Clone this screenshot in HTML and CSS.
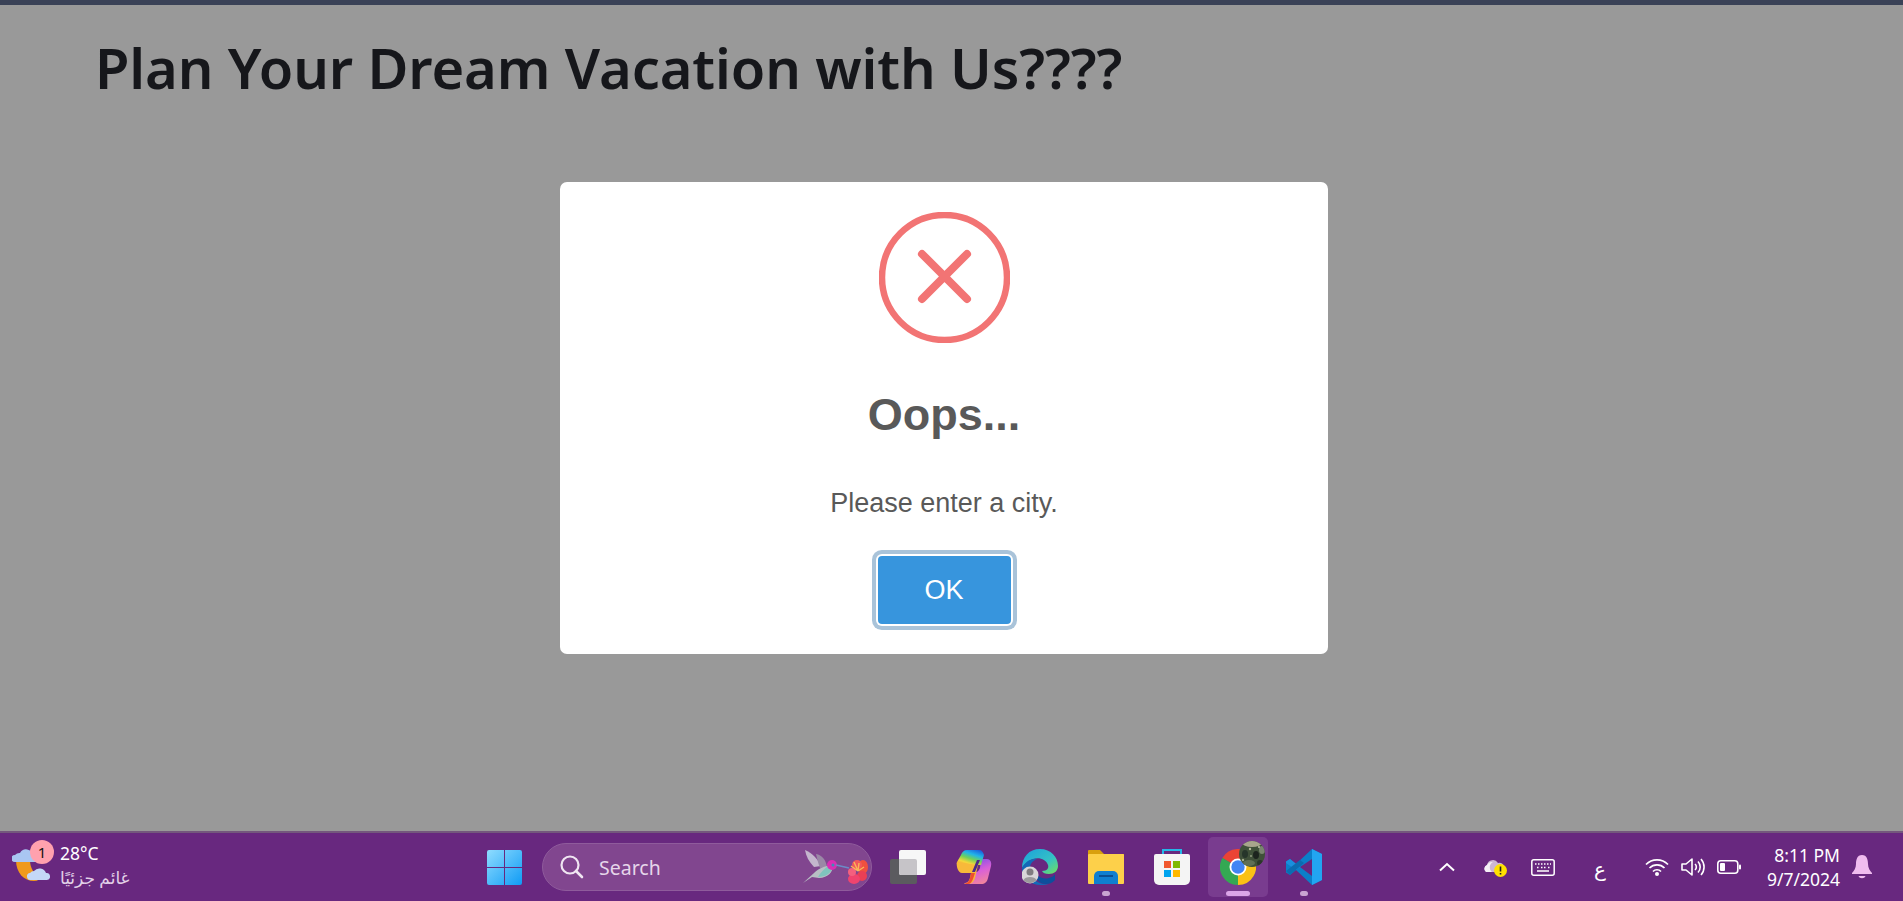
FILE: index.html
```html
<!DOCTYPE html>
<html lang="en">
<head>
<meta charset="utf-8">
<title>Plan Your Dream Vacation</title>
<link rel="stylesheet" href="styles.css">
</head>
<body>
<div class="topline"></div>
<main class="page">
  <h1 class="headline">Plan Your Dream Vacation with Us????</h1>
  <div class="overlay">
    <div class="modal" role="dialog">
      <svg class="err-icon" viewBox="0 0 131 131" width="131" height="131">
        <circle cx="65.5" cy="65.5" r="62.5" fill="none" stroke="#f27474" stroke-width="6.500"/>
        <path d="M43 42 L88 87 M88 42 L43 87" fill="none" stroke="#f27474" stroke-width="8" stroke-linecap="round"/>
      </svg>
      <h2 class="modal-title">Oops...</h2>
      <p class="modal-text">Please enter a city.</p>
      <button class="modal-ok">OK</button>
    </div>
  </div>
</main>
<footer class="taskbar">
  <div class="weather">
    <span class="weather-icon">
      <svg viewBox="0 0 38 42" width="38" height="42">
        <path d="M4 14 C4 27 12 35 22 35 C26 35 28 33 29 31 C22 29 18 22 18 14 Z" fill="#f09a1c"/>
        <path d="M3 16 a3.500 3.500 0 0 1 0 -7 a6 6 0 0 1 5 -2 a7 7 0 0 1 13 2 a3.500 3.500 0 0 1 3 7 z" fill="#a9c6f2"/>
        <path d="M19 34 a3.500 3.500 0 0 1 -1 -7 a5 5 0 0 1 4 -2 a7 7 0 0 1 12 2 a3.500 3.500 0 0 1 1 7 z" fill="#c4d8f7"/>
      </svg>
      <span class="badge">1</span>
    </span>
    <div class="weather-text">
      <span class="temp">28°C</span>
      <span class="cond" dir="rtl">غائم جزئيًا</span>
    </div>
  </div>
  <div class="center">
    <span class="start">
      <svg viewBox="0 0 35 35" width="35" height="35">
        <defs>
          <linearGradient id="win" x1="0" y1="0" x2="1" y2="1"><stop offset="0" stop-color="#8fdcff"/><stop offset="1" stop-color="#0f9bf5"/></linearGradient>
        </defs>
        <path d="M2 0h15v17H0V2a2 2 0 0 1 2-2zM18 0h15a2 2 0 0 1 2 2v15H18zM0 18h17v17H2a2 2 0 0 1-2-2zM18 18h17v15a2 2 0 0 1-2 2H18z" fill="url(#win)"/>
      </svg>
    </span>
    <div class="search">
      <svg class="search-glass" viewBox="0 0 24 24" width="24" height="24">
        <circle cx="10" cy="10" r="8.500" fill="none" stroke="#f0e6f2" stroke-width="2.200"/>
        <path d="M16 16 L22 22" stroke="#f0e6f2" stroke-width="2.600" stroke-linecap="round"/>
      </svg>
      <span class="search-label">Search</span>
      <svg class="search-art" viewBox="0 0 66 36" width="66" height="36">
        <path d="M3 1 C10 4 16 10 19 17 L12 18 C7 13 4 7 3 1 Z" fill="#c4b6cd"/>
        <path d="M14 5 C20 6 24 11 25 18 L18 19 C16 14 15 9 14 5 Z" fill="#9a88a6"/>
        <path d="M1 34 L12 24 C18 18 26 16 30 17 C32 22 26 29 17 29 L10 28 Z" fill="#b8bfc4"/>
        <path d="M16 28 C24 28 29 24 31 18 L26 17 C22 20 18 24 16 28 Z" fill="#7fc4bd"/>
        <circle cx="30" cy="16" r="5" fill="#d92fb4"/>
        <circle cx="31" cy="16" r="1.500" fill="#3a8fb8"/>
        <path d="M34 16 L47 19" stroke="#6b8bc7" stroke-width="1.400"/>
        <ellipse cx="61" cy="18" rx="5" ry="7" fill="#f0503f"/>
        <ellipse cx="55" cy="16" rx="5" ry="5" fill="#f2585a"/>
        <ellipse cx="60" cy="27" rx="5" ry="5" fill="#ea3f55"/>
        <ellipse cx="52" cy="30" rx="6" ry="5" fill="#f0446e"/>
        <ellipse cx="50" cy="23" rx="4" ry="4" fill="#f4607e"/>
        <path d="M56 22 L52 13 M56 22 L49 17 M56 22 L57 14 M56 22 L62 18" stroke="#f9b65a" stroke-width="1.400"/>
      </svg>
    </div>
    <span class="tile">
      <svg viewBox="0 0 36 34" width="36" height="34">
        <rect x="0" y="9" width="27" height="25" rx="2" fill="#5b5b5f"/>
        <rect x="9" y="0" width="27" height="25" rx="2" fill="#f7f7f7"/>
        <path d="M9 9h16a2 2 0 0 1 2 2v14H11a2 2 0 0 1-2-2z" fill="#c6c4c8"/>
      </svg>
    </span>
    <span class="tile">
      <svg viewBox="0 0 36 34" width="36" height="34">
        <defs>
          <linearGradient id="cp1" x1=".8" y1="0" x2=".2" y2="1"><stop offset="0" stop-color="#1a5fe0"/><stop offset=".3" stop-color="#22b5e8"/><stop offset=".55" stop-color="#6fd25a"/><stop offset=".8" stop-color="#f6d73a"/><stop offset="1" stop-color="#f2a03a"/></linearGradient>
          <linearGradient id="cp2" x1=".3" y1="0" x2=".7" y2="1"><stop offset="0" stop-color="#7b4fe6"/><stop offset=".5" stop-color="#d95fd8"/><stop offset="1" stop-color="#f2869a"/></linearGradient>
        </defs>
        <path d="M25 9h6c3 0 5 3 4 7l-3 12c-1 4-3 6-7 6H12c-2 0-3 0-4-1 3 0 6-2 7-6l2-5h3c2 0 3-2 4-4z" fill="url(#cp2)"/>
        <path d="M11 0h12c3 0 4 2 5 5l-3 10H6c-4 0-6 1-5-3L5 5c1-3 3-5 6-5z" fill="url(#cp1)"/>
        <path d="M1 12c-1 4 1 11 5 11h9l-1 5c-1 3-2 5-6 6h4c4 0 6-3 7-6l3-13z" fill="#f8b93a"/>
        <path d="M15 23h4l-2 6c-1 3-3 5-5 5H8c4-1 5-3 6-6z" fill="#ee4f2e"/>
        <path d="M16 22 L21 10 L24 10 L19 22 Z" fill="#4a2a8a"/>
      </svg>
    </span>
    <span class="tile">
      <svg viewBox="0 0 36 36" width="36" height="36">
        <defs>
          <linearGradient id="ed1" x1="0" y1="0" x2="1" y2="1"><stop offset="0" stop-color="#1aa0dc"/><stop offset=".6" stop-color="#35c1c5"/><stop offset="1" stop-color="#74e05a"/></linearGradient>
        </defs>
        <path d="M18 0 C29 0 36 8 36 17 C36 22 32 25 27 25 C23 25 21 24 20 22 C25 22 27 19 26 16 C24 10 17 8 11 10 C5 12 1 17 0 19 C0 8 7 0 18 0 Z" fill="url(#ed1)"/>
        <path d="M0 19 C3 13 9 9 15 10 C10 12 7 16 8 22 C9 29 15 35 24 35 C27 35 30 34 33 31 C29 35 24 36 19 36 C8 36 0 29 0 19 Z" fill="#1269b8"/>
        <path d="M12 20 C14 27 20 31 27 29 C30 28 32 27 33 25 L33 31 C30 34 27 35 24 35 C17 35 12 29 12 20 Z" fill="#0d4f9c"/>
        <circle cx="8" cy="26" r="8.500" fill="#d8d6d8"/>
        <circle cx="8" cy="23" r="3.500" fill="#7f7c80"/>
        <path d="M1.500 31 C3 27 13 27 14.500 31 C12 35 4 35 1.500 31 Z" fill="#9b999c"/>
      </svg>
    </span>
    <span class="tile">
      <svg viewBox="0 0 36 34" width="36" height="34">
        <path d="M1 0h11l4 4h20v6H0V1a1 1 0 0 1 1-1z" fill="#d9a00e"/>
        <rect x="0" y="4" width="36" height="30" rx="1" fill="#fdd04a"/>
        <path d="M6 34v-8a5 5 0 0 1 5-5h14a5 5 0 0 1 5 5v8z" fill="#0f7fd0"/>
        <rect x="11" y="25" width="14" height="2" fill="#0a4f92"/>
      </svg>
      <span class="ind ind-dot"></span>
    </span>
    <span class="tile">
      <svg viewBox="0 0 36 36" width="36" height="36">
        <path d="M9 6V1h18v5" fill="none" stroke="#25b7e8" stroke-width="2"/>
        <path d="M2 5h32a2 2 0 0 1 2 2v24a5 5 0 0 1-5 5H5a5 5 0 0 1-5-5V7a2 2 0 0 1 2-2z" fill="#f4f4f4"/>
        <rect x="10" y="12" width="7" height="7" fill="#f1582e"/>
        <rect x="19" y="12" width="7" height="7" fill="#7fb900"/>
        <rect x="10" y="21" width="7" height="7" fill="#00a4ef"/>
        <rect x="19" y="21" width="7" height="7" fill="#ffb900"/>
      </svg>
    </span>
    <span class="tile tile-active">
      <svg viewBox="0 0 36 36" width="36" height="36">
        <path d="M18 18 L2.400 9 A18 18 0 0 1 33.600 9 Z" fill="#ea4335"/>
        <path d="M18 18 L33.600 9 A18 18 0 0 1 18 36 Z" fill="#fbc116"/>
        <path d="M18 18 L18 36 A18 18 0 0 1 2.400 9 Z" fill="#34a853"/>
        <circle cx="18" cy="18" r="8.500" fill="#fff"/>
        <circle cx="18" cy="18" r="6.700" fill="#4285f4"/>
      </svg>
      <svg class="avatar" viewBox="0 0 26 26" width="26" height="26">
        <defs><clipPath id="av"><circle cx="13" cy="13" r="13"/></clipPath></defs>
        <g clip-path="url(#av)">
          <rect width="26" height="26" fill="#3f5039"/>
          <ellipse cx="13" cy="2" rx="10" ry="4" fill="#a8a58c"/>
          <ellipse cx="6" cy="13" rx="3" ry="4" fill="#26352a"/>
          <ellipse cx="17" cy="14" rx="3" ry="4" fill="#1c241e"/>
          <ellipse cx="23" cy="9" rx="3" ry="4" fill="#7a8570"/>
          <ellipse cx="10" cy="22" rx="6" ry="3" fill="#5f6f55"/>
          <ellipse cx="21" cy="22" rx="3" ry="3" fill="#2b362a"/>
          <circle cx="11" cy="8" r="1.200" fill="#b4b99a"/>
          <circle cx="4" cy="19" r="1.200" fill="#a3ad8c"/>
          <circle cx="20" cy="6" r="1" fill="#c2c6a8"/>
          <circle cx="12" cy="15" r="1" fill="#8f9a7c"/>
        </g>
      </svg>
      <span class="ind ind-bar"></span>
    </span>
    <span class="tile">
      <svg viewBox="0 0 36 36" width="36" height="36">
        <path d="M26 0 L36 5 V31 L26 36 L10 21 L4 26 L0 23.500 V12.500 L4 10 L10 15 Z" fill="#0b7fc9"/>
        <path d="M26 0 L36 5 V31 L26 36 Z" fill="#22a5f1"/>
        <path d="M26 10 L14 18 L26 27 Z" fill="#68277f"/>
        <path d="M4 10 L0 12.500 L0 14 L10 21 L14 18 Z" fill="#1a8fdd"/>
        <path d="M0 22 L14 11 L18 14 L4 26 Z" fill="#0b6cb0"/>
      </svg>
      <span class="ind ind-dot"></span>
    </span>
  </div>
  <div class="tray">
    <span class="tray-cell">
      <svg viewBox="0 0 16 10" width="16" height="10"><path d="M1 8.500 L8 2 L15 8.500" fill="none" stroke="#fff" stroke-width="2"/></svg>
    </span>
    <span class="tray-cell">
      <svg viewBox="0 0 24 20" width="24" height="20">
        <path d="M3 15 a4 4 0 0 1 1 -7 a6 6 0 0 1 11 -2 a5 5 0 0 1 4 9 z" fill="#cdb6d4"/>
        <path d="M3 15 a4 4 0 0 1 1 -7 a6 6 0 0 1 6 -3 a6 6 0 0 0 -1 10 z" fill="#f6f0f7"/>
        <circle cx="17.500" cy="13.500" r="6.500" fill="#ffe000"/>
        <path d="M17.500 9.500v5M17.500 16v1.500" stroke="#222" stroke-width="1.600"/>
      </svg>
    </span>
    <span class="tray-cell">
      <svg viewBox="0 0 24 17" width="24" height="17">
        <rect x=".8" y=".8" width="22.400" height="15.400" rx="2" fill="none" stroke="#fff" stroke-width="1.500"/>
        <path d="M4 5h1.500M7 5h1.500M10 5h1.500M13 5h1.500M16 5h1.500M19 5h1M6 8.500h1.500M10 8.500h1.500M13 8.500h1.500M17 8.500h1.500M6 12h12" stroke="#fff" stroke-width="1.500"/>
      </svg>
    </span>
    <span class="tray-cell tray-lang">ع</span>
    <span class="tray-group">
      <span class="tray-small">
        <svg viewBox="0 0 24 18" width="24" height="18">
          <path d="M1 6.500 a15.500 15.500 0 0 1 22 0 M4.500 10 a10.500 10.500 0 0 1 15 0 M8 13.500 a5.500 5.500 0 0 1 8 0" fill="none" stroke="#fff" stroke-width="1.700"/>
          <circle cx="12" cy="16" r="2" fill="#fff"/>
        </svg>
      </span>
      <span class="tray-small">
        <svg viewBox="0 0 24 20" width="24" height="20">
          <path d="M1 7h4l6-5v16l-6-5H1z" fill="none" stroke="#fff" stroke-width="1.600" stroke-linejoin="round"/>
          <path d="M14 7 a4 4 0 0 1 0 6 M17 4.500 a8 8 0 0 1 0 11 M20 2 a12 12 0 0 1 0 16" fill="none" stroke="#fff" stroke-width="1.600"/>
        </svg>
      </span>
      <span class="tray-small">
        <svg viewBox="0 0 24 14" width="24" height="14">
          <rect x=".8" y=".8" width="20" height="12.400" rx="3" fill="none" stroke="#fff" stroke-width="1.600"/>
          <rect x="3" y="3" width="5" height="8" rx="1" fill="#fff"/>
          <rect x="22" y="4.500" width="2" height="5" rx="1" fill="#fff"/>
        </svg>
      </span>
    </span>
    <div class="clock">
      <span>8:11 PM</span>
      <span>9/7/2024</span>
    </div>
    <span class="bell-cell">
      <svg viewBox="0 0 20 24" width="20" height="24">
        <path d="M10 0 C15 0 16 5 16 9 C16 13 18 16 20 18 V19 H0 V18 C2 16 4 13 4 9 C4 5 5 0 10 0 Z" fill="#f0bcef"/>
        <path d="M6.500 21 H13.500 C12.500 24 7.500 24 6.500 21 Z" fill="#f0bcef"/>
      </svg>
    </span>
  </div>
</footer>
</body>
</html>
```
FILE: styles.css
```css
* { box-sizing: border-box; }
html, body { height: 100%; }
body {
  margin: 0;
  display: flex;
  flex-direction: column;
  height: 901px;
  overflow: hidden;
  background: #999;
  font-family: "Noto Sans", "DejaVu Sans", sans-serif;
}
.topline { height: 5px; background: #3a4257; flex: none; }
.page {
  flex: 1;
  position: relative;
  padding: 0 95px;
  min-height: 0;
}
.headline {
  margin: 17px 0 0;
  font-size: 56px;
  line-height: 90px;
  font-weight: 600;
  letter-spacing: -0.1px;
  color: #16171b;
  white-space: nowrap;
}
.overlay {
  position: absolute;
  inset: 0;
  display: flex;
  justify-content: center;
  align-items: flex-start;
  padding-top: 177px;
  padding-right: 15px;
}
.modal {
  width: 768px;
  height: 472px;
  background: #fff;
  border-radius: 7px;
  padding-top: 30px;
  display: flex;
  flex-direction: column;
  align-items: center;
  font-family: "Liberation Sans", Arial, sans-serif;
}
.err-icon { display: block; flex: none; }
.modal-title {
  margin: 45px 0 0;
  font-size: 45px;
  line-height: 54px;
  font-weight: 700;
  color: #595959;
}
.modal-text {
  margin: 41px 0 0;
  font-size: 27px;
  line-height: 40px;
  color: #595959;
}
.modal-ok {
  margin-top: 33px;
  width: 133px;
  height: 68px;
  border: 0;
  border-radius: 4px;
  background: #3795dd;
  color: #fff;
  font: 400 27px "Liberation Sans", Arial, sans-serif;
  box-shadow: 0 0 0 2px #fff, 0 0 0 6px #a9c3d9;
}
.taskbar {
  flex: none;
  height: 70px;
  background: #68287f;
  border-top: 2px solid #74587d;
  display: flex;
  align-items: center;
  padding-left: 12px;
  color: #fff;
}
.weather {
  width: 475px;
  flex: none;
  display: flex;
  align-items: center;
  gap: 10px;
}
.weather-icon { position: relative; display: block; width: 38px; height: 42px; }
.weather-icon svg { display: block; }
.badge {
  position: absolute;
  left: 18px;
  top: -6px;
  width: 24px;
  height: 24px;
  border-radius: 50%;
  background: #ffa1ae;
  color: #111;
  font-size: 15px;
  line-height: 24px;
  text-align: center;
}
.weather-text { display: flex; flex-direction: column; margin-top: -3px; }
.temp { font-size: 17.5px; line-height: 24px; color: #fff; }
.cond { font-size: 17px; line-height: 25px; color: #e3d2e8; align-self: flex-start; }
.center { display: flex; align-items: center; flex: none; }
.start { display: block; width: 35px; height: 35px; margin-right: 20px; }
.start svg { display: block; }
.search {
  width: 330px;
  height: 48px;
  margin-right: 6px;
  border-radius: 24px;
  background: #81468f;
  border: 1px solid #8f5b9c;
  display: flex;
  align-items: center;
  padding-left: 17px;
  padding-right: 3px;
}
.search-glass { display: block; flex: none; }
.search-label { margin-left: 15px; font-size: 19.5px; color: #e6d6ea; }
.search-art { margin-left: auto; display: block; }
.tile {
  position: relative;
  width: 60px;
  height: 60px;
  margin-right: 6px;
  border-radius: 5px;
  display: flex;
  align-items: center;
  justify-content: center;
}
.tile:last-child { margin-right: 0; }
.tile-active { background: #793c8f; }
.avatar { position: absolute; left: 31px; top: 4px; }
.ind {
  position: absolute;
  bottom: 1px;
  left: 50%;
  height: 5px;
  border-radius: 3px;
  transform: translateX(-50%);
}
.ind-dot { width: 8px; background: #c9a4d2; }
.ind-bar { width: 24px; background: #dba5e8; }
.tray { margin-left: auto; display: flex; align-items: center; padding-right: 19px; }
.tray-cell { width: 48px; display: flex; align-items: center; justify-content: center; }
.tray-lang { width: 66px; font-size: 20px; line-height: 30px; padding-top: 4px; }
.tray-group { display: flex; margin-left: 6px; }
.tray-small { width: 36px; display: flex; align-items: center; justify-content: center; }
.clock {
  width: 93px;
  display: flex;
  flex-direction: column;
  align-items: flex-end;
  font-size: 17.5px;
  line-height: 24px;
  margin-top: -1px;
}
.bell-cell { width: 44px; display: flex; align-items: center; justify-content: center; }
```
